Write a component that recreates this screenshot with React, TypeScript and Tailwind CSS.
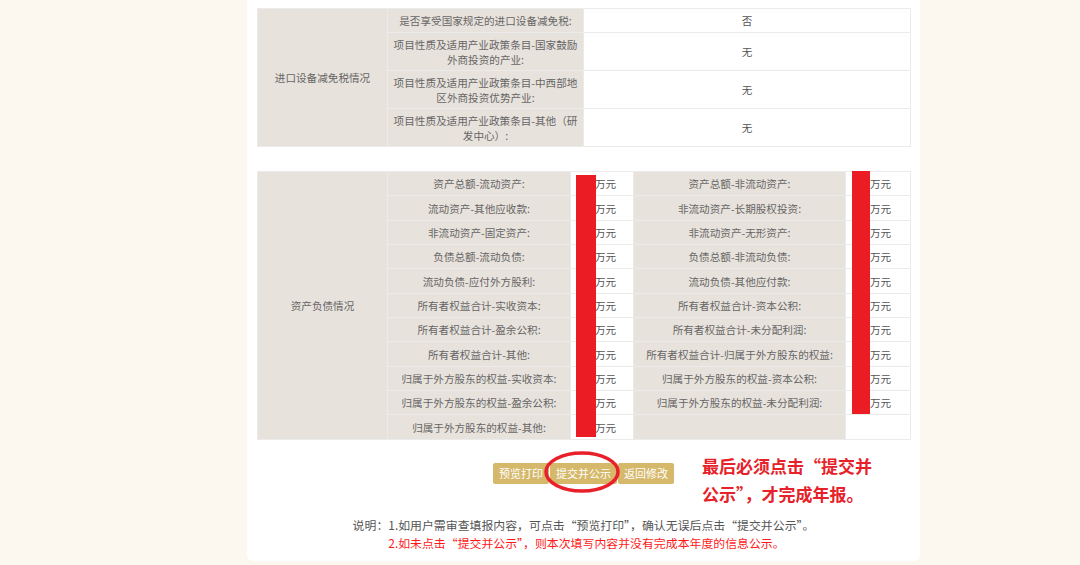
const importRows = [
  { label: '是否享受国家规定的进口设备减免税:', value: '否', h: 'h-[24px]' },
  { label: '项目性质及适用产业政策条目-国家鼓励外商投资的产业:', value: '无', h: 'h-[38px]' },
  { label: '项目性质及适用产业政策条目-中西部地区外商投资优势产业:', value: '无', h: 'h-[38px]' },
  { label: '项目性质及适用产业政策条目-其他（研发中心）:', value: '无', h: 'h-[38px]' },
]

const balanceRows: [string, string][] = [
  ['资产总额-流动资产:', '资产总额-非流动资产:'],
  ['流动资产-其他应收款:', '非流动资产-长期股权投资:'],
  ['非流动资产-固定资产:', '非流动资产-无形资产:'],
  ['负债总额-流动负债:', '负债总额-非流动负债:'],
  ['流动负债-应付外方股利:', '流动负债-其他应付款:'],
  ['所有者权益合计-实收资本:', '所有者权益合计-资本公积:'],
  ['所有者权益合计-盈余公积:', '所有者权益合计-未分配利润:'],
  ['所有者权益合计-其他:', '所有者权益合计-归属于外方股东的权益:'],
  ['归属于外方股东的权益-实收资本:', '归属于外方股东的权益-资本公积:'],
  ['归属于外方股东的权益-盈余公积:', '归属于外方股东的权益-未分配利润:'],
  ['归属于外方股东的权益-其他:', ''],
]

const th = 'border border-[#ebebeb] bg-[#e8e2dc] text-center text-[#666]'
const td = 'border border-[#ebebeb] bg-white'

function Unit({ show = true }: { show?: boolean }) {
  if (!show) return null
  return (
    <div className="flex items-center">
      {/* 输入框位置 */}
      <span className="inline-block w-[24px]" />
      <span className="text-[#555]">万元</span>
    </div>
  )
}

export default function App() {
  return (
    <div className="min-h-[565px] bg-[#fcf8ef] font-['Noto_Sans_CJK_SC','Microsoft_YaHei',sans-serif]">
      <div className="relative ml-[247px] w-[673px] rounded-b-[6px] bg-white px-[10px] pb-[9px] pt-[8px] text-[10.6px] leading-[15px]">
        {/* 进口设备减免税 */}
        <table className="w-[654px] table-fixed border-collapse">
          <colgroup>
            <col className="w-[130px]" />
            <col className="w-[196px]" />
            <col />
          </colgroup>
          <tbody>
            {importRows.map((r, i) => (
              <tr key={i} className={r.h}>
                {i === 0 && (
                  <td rowSpan={4} className={th}>
                    进口设备减免税情况
                  </td>
                )}
                <td className={`${th} px-[2px]`}>{r.label}</td>
                <td className={`${td} text-center text-[#555]`}>{r.value}</td>
              </tr>
            ))}
          </tbody>
        </table>

        {/* 资产负债 */}
        <div className="relative mt-[24px]">
          <table className="w-[654px] table-fixed border-collapse">
            <colgroup>
              <col className="w-[130px]" />
              <col className="w-[183px]" />
              <col className="w-[63px]" />
              <col className="w-[212px]" />
              <col />
            </colgroup>
            <tbody>
              {balanceRows.map(([l, r], i) => (
                <tr key={i} className="h-[24.35px]">
                  {i === 0 && (
                    <td rowSpan={11} className={th}>
                      资产负债情况
                    </td>
                  )}
                  <td className={`${th} whitespace-nowrap`}>{l}</td>
                  <td className={td}>
                    <Unit />
                  </td>
                  <td className={`${th} whitespace-nowrap`}>{r}</td>
                  <td className={td}>
                    <Unit show={r !== ''} />
                  </td>
                </tr>
              ))}
            </tbody>
          </table>
          {/* 遮挡的数值 */}
          <div className="absolute left-[319px] top-[4px] h-[262px] w-[20px] bg-[#ec1c24]" />
          <div className="absolute left-[595px] top-0 h-[243px] w-[18px] bg-[#ec1c24]" />
        </div>

        {/* 按钮 */}
        <div className="mt-[23px] flex justify-center gap-[1px]">
          <button className="h-[21px] rounded-[2px] bg-[#d5b86a] px-[6px] text-[11px] text-white">预览打印</button>
          <button className="h-[21px] rounded-[2px] bg-[#d5b86a] px-[6px] text-[11px] text-white">提交并公示</button>
          <button className="h-[21px] rounded-[2px] bg-[#d5b86a] px-[6px] text-[11px] text-white">返回修改</button>
        </div>

        {/* 说明 */}
        <div className="mt-[32px] flex justify-center text-[11.9px] leading-[18px]">
          <span className="text-[#555]">说明：</span>
          <div>
            <p className="text-[#555]">1.如用户需审查填报内容，可点击“预览打印”，确认无误后点击“提交并公示”。</p>
            <p className="text-[#ff1a1a]">2.如未点击“提交并公示”，则本次填写内容并没有完成本年度的信息公示。</p>
          </div>
        </div>

        {/* 标注 */}
        <svg className="absolute left-[296px] top-[450px]" width="78" height="44" viewBox="0 0 78 44" fill="none">
          <ellipse cx="39" cy="22" rx="36" ry="19" stroke="#e8202a" strokeWidth="3.5" />
        </svg>
        <div className="absolute left-[455px] top-[452px] w-[180px] text-[17px] font-bold leading-[28px] text-[#e62129]">
          最后必须点击“提交并公示”，才完成年报。
        </div>
      </div>
    </div>
  )
}
